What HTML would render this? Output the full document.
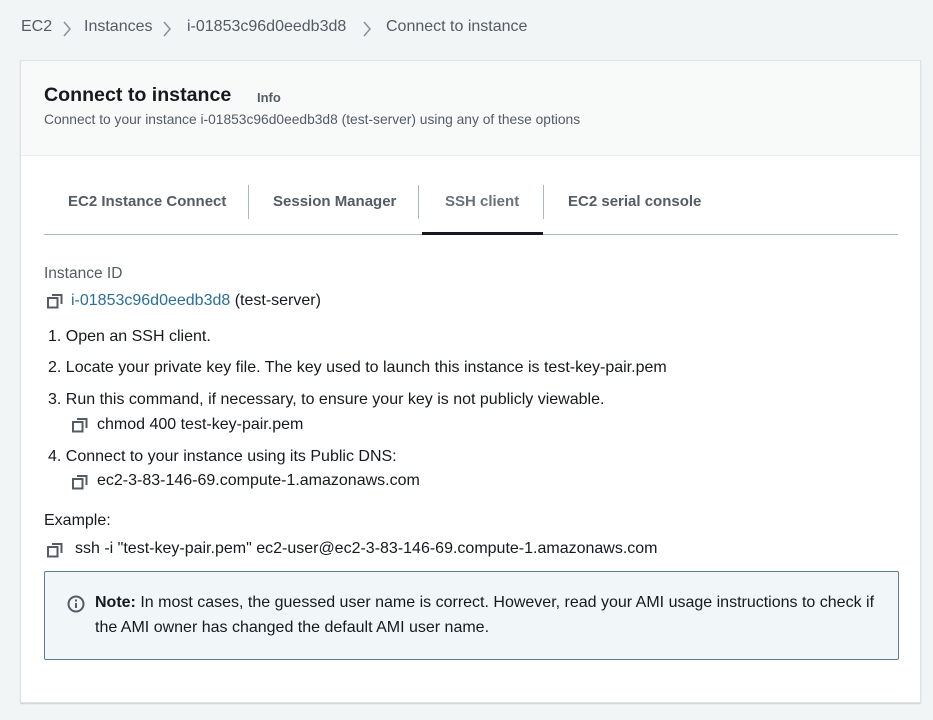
<!DOCTYPE html>
<html><head><meta charset="utf-8"><style>
*{margin:0;padding:0;box-sizing:border-box}
body{width:933px;height:720px;background:#f2f5f6;font-family:"Liberation Sans",sans-serif;color:#16191f;position:relative;overflow:hidden}
.a{position:absolute;white-space:nowrap}
.bc{top:18px;font-size:16px;color:#545b64}
.card{position:absolute;left:20px;top:60px;width:901px;height:643px;background:#fff;border:1px solid #dde2e5;box-shadow:0 1px 1px rgba(0,0,0,.15)}
.hdr{position:absolute;left:0;top:0;width:100%;height:95px;background:#f8fafa;border-bottom:1px solid #eaeded}
.tab{top:193px;font-size:15px;font-weight:bold;color:#545b64}
.tsep{position:absolute;top:185px;width:1px;height:34px;background:#aab7b8}
.t{font-size:16px;color:#16191f}
.cp{position:absolute;width:16px;height:16px}
.chev{position:absolute;top:21px}
</style></head><body>
<div class="a bc" style="left:21px">EC2</div>
<svg class="chev" style="left:62px" width="10" height="16"><path d="M2 1l6 7-6 7" fill="none" stroke="#879196" stroke-width="1.5"/></svg>
<div class="a bc" style="left:84px">Instances</div>
<svg class="chev" style="left:162px" width="10" height="16"><path d="M2 1l6 7-6 7" fill="none" stroke="#879196" stroke-width="1.5"/></svg>
<div class="a bc" style="left:187px">i-01853c96d0eedb3d8</div>
<svg class="chev" style="left:362px" width="10" height="16"><path d="M2 1l6 7-6 7" fill="none" stroke="#879196" stroke-width="1.5"/></svg>
<div class="a bc" style="left:386px">Connect to instance</div>

<div class="card">
<div class="hdr"></div>
</div>
<div class="a" style="left:44px;top:84px;font-size:19.6px;font-weight:bold;color:#16191f">Connect to instance</div>
<div class="a" style="left:257px;top:90px;font-size:13px;font-weight:bold;color:#545b64">Info</div>
<div class="a" style="left:44px;top:112px;font-size:13.8px;color:#545b64">Connect to your instance i-01853c96d0eedb3d8 (test-server) using any of these options</div>

<div class="a tab" style="left:68px">EC2 Instance Connect</div>
<div class="tsep" style="left:248px"></div>
<div class="a tab" style="left:273px">Session Manager</div>
<div class="tsep" style="left:418px"></div>
<div class="a tab" style="left:445px;color:#687078">SSH client</div>
<div class="tsep" style="left:543px"></div>
<div class="a tab" style="left:568px">EC2 serial console</div>
<div style="position:absolute;left:44px;top:234px;width:854px;height:1px;background:#aab7b8"></div>
<div style="position:absolute;left:422px;top:232px;width:121px;height:3px;background:#16191f"></div>

<svg width="0" height="0" style="position:absolute"><defs><g id="c"><rect x="1" y="5" width="9.5" height="9.5" fill="none" stroke="#545b64" stroke-width="2"/><path d="M5 2H14.5V11" fill="none" stroke="#545b64" stroke-width="2"/></g></defs></svg>

<div class="a" style="left:44px;top:265px;font-size:15.5px;color:#545b64">Instance ID</div>
<svg class="cp" style="left:47px;top:293px"><use href="#c"/></svg>
<div class="a t" style="left:71px;top:292px"><span style="color:#2a6f97">i-01853c96d0eedb3d8</span> (test-server)</div>
<div class="a t" style="left:48px;top:328px">1. Open an SSH client.</div>
<div class="a t" style="left:48px;top:359px">2. Locate your private key file. The key used to launch this instance is test-key-pair.pem</div>
<div class="a t" style="left:48px;top:391px">3. Run this command, if necessary, to ensure your key is not publicly viewable.</div>
<svg class="cp" style="left:72px;top:417px"><use href="#c"/></svg>
<div class="a t" style="left:97px;top:416px">chmod 400 test-key-pair.pem</div>
<div class="a t" style="left:48px;top:448px">4. Connect to your instance using its Public DNS:</div>
<svg class="cp" style="left:72px;top:474px"><use href="#c"/></svg>
<div class="a t" style="left:97px;top:472px">ec2-3-83-146-69.compute-1.amazonaws.com</div>
<div class="a t" style="left:44px;top:512px">Example:</div>
<svg class="cp" style="left:47px;top:542px"><use href="#c"/></svg>
<div class="a t" style="left:75px;top:540px">ssh -i "test-key-pair.pem" ec2-user@ec2-3-83-146-69.compute-1.amazonaws.com</div>

<div style="position:absolute;left:44px;top:571px;width:855px;height:89px;background:#f1f6f8;border:1px solid #5f7d91;border-radius:2px"></div>
<svg style="position:absolute;left:67px;top:595px" width="18" height="18"><circle cx="9" cy="9" r="7.5" fill="none" stroke="#545b64" stroke-width="2"/><rect x="8" y="8" width="2" height="5" fill="#545b64"/><rect x="8" y="4.5" width="2" height="2" fill="#545b64"/></svg>
<div class="a t" style="left:95px;top:594px">
<b>Note:</b> In most cases, the guessed user name is correct. However, read your AMI usage instructions to check if</div>
<div class="a t" style="left:95px;top:619px">the AMI owner has changed the default AMI user name.</div>
</body></html>
